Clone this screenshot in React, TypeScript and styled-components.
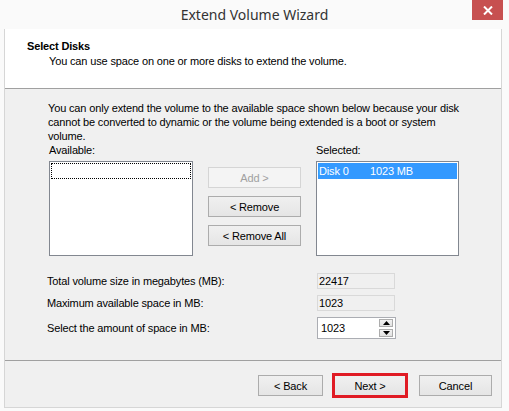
import styled, { createGlobalStyle } from "styled-components";

const Global = createGlobalStyle`
  html, body {
    margin: 0;
    padding: 0;
    background: #fafafa;
  }
  * {
    box-sizing: border-box;
  }
`;

const Window = styled.div`
  width: 509px;
  height: 411px;
  background: #fafafa;
  display: flex;
  flex-direction: column;
  padding: 0 7px 3px 4px;
  font-family: "Liberation Sans", Arial, sans-serif;
  font-size: 11px;
  letter-spacing: -0.15px;
  color: #000;
`;

const TitleBar = styled.div`
  height: 29px;
  display: grid;
  grid-template-columns: 1fr auto 1fr;
  align-items: start;
`;

const Title = styled.div`
  grid-column: 2;
  font-family: "Noto Sans", "Open Sans", sans-serif;
  font-size: 14px;
  letter-spacing: 0;
  color: #333;
  line-height: 29px;
  margin-left: 3px;
`;

const CloseButton = styled.div`
  grid-column: 3;
  justify-self: end;
  width: 31px;
  height: 20px;
  margin-right: -1px;
  background: #c75050;
  display: flex;
  align-items: center;
  justify-content: center;
`;

const Client = styled.div`
  flex: 1;
  display: flex;
  flex-direction: column;
  border: 1px solid #d6d6d6;
  border-top: none;
  background: #f0f0f0;
`;

const Header = styled.div`
  height: 60px;
  background: #fff;
  border-bottom: 1px solid #a0a0a0;
  padding: 10px 0 0 22px;
`;

const HeaderTitle = styled.div`
  font-weight: bold;
  line-height: 14px;
`;

const HeaderSub = styled.div`
  padding-left: 22px;
  line-height: 14px;
  margin-top: 1px;
`;

const Body = styled.div`
  flex: 1;
  padding: 12px 0 0 43px;
  display: flex;
  flex-direction: column;
`;

const Paragraph = styled.div`
  line-height: 14px;
  white-space: nowrap;
`;

const ListsRow = styled.div`
  display: grid;
  grid-template-columns: 144px 93px 143px;
  column-gap: 15px;
  margin-left: 1px;
`;

const Column = styled.div`
  display: flex;
  flex-direction: column;
`;

const ListLabel = styled.div`
  line-height: 14px;
  height: 18px;
`;

const ListBox = styled.div`
  height: 95px;
  background: #fff;
  border: 1px solid #828790;
  padding: 1px;
`;

const FocusRow = styled.div`
  height: 16px;
  border: 1px dotted #000;
`;

const SelectedRow = styled.div`
  height: 16px;
  background: #3399ff;
  color: #fff;
  display: flex;
  align-items: center;
  line-height: 14px;
`;

const Cell = styled.span<{ $w?: number }>`
  width: ${(p) => (p.$w ? `${p.$w}px` : "auto")};
  padding-left: 1px;
`;

const Buttons = styled.div`
  display: flex;
  flex-direction: column;
  gap: 8px;
  padding-top: 24px;
`;

const Button = styled.div<{ $w?: number; $disabled?: boolean; $gap?: number }>`
  width: ${(p) => (p.$w ? `${p.$w}px` : "100%")};
  height: 21px;
  margin-left: ${(p) => p.$gap ?? 0}px;
  display: flex;
  align-items: center;
  justify-content: center;
  border: 1px solid ${(p) => (p.$disabled ? "#d5d5d5" : "#acacac")};
  background: ${(p) =>
    p.$disabled ? "#f4f4f4" : "linear-gradient(#f0f0f0, #e5e5e5)"};
  color: ${(p) => (p.$disabled ? "#a0a0a0" : "#000")};
`;

const Fields = styled.div`
  display: grid;
  grid-template-columns: 270px 79px;
  grid-template-rows: 16px 16px 22px;
  row-gap: 6px;
  margin-top: 17px;
  margin-left: -1px;
  align-items: center;
`;

const FieldLabel = styled.div`
  line-height: 14px;
`;

const ReadOnly = styled.div`
  height: 16px;
  width: 78px;
  border: 1px solid #d9d9d9;
  background: #f0f0f0;
  line-height: 14px;
  padding-left: 1px;
`;

const Spinner = styled.div`
  height: 22px;
  width: 79px;
  border: 1px solid #abadb3;
  background: #fff;
  display: flex;
  align-items: center;
  justify-content: space-between;
  padding: 1px 2px 1px 3px;
`;

const SpinButtons = styled.div`
  display: flex;
  flex-direction: column;
  gap: 2px;
`;

const SpinButton = styled.div`
  width: 14px;
  height: 8px;
  border: 1px solid #acacac;
  background: linear-gradient(#f2f2f2, #e2e2e2);
  display: flex;
  align-items: center;
  justify-content: center;
`;

const Footer = styled.div`
  height: 47px;
  border-top: 1px solid #a0a0a0;
  display: flex;
  align-items: flex-start;
  padding: 14px 0 0 253px;
`;

const NextHighlight = styled.div`
  margin-left: 9px;
  margin-top: -2px;
  border: 3px solid #e01b24;
  width: 76px;
  height: 25px;
  display: flex;
`;

const NextButton = styled.div`
  flex: 1;
  display: flex;
  align-items: center;
  justify-content: center;
  background: linear-gradient(#f0f0f0, #e5e5e5);
`;

const Arrow = ({ up }: { up?: boolean }) => (
  <svg width="7" height="4" viewBox="0 0 7 4">
    <path d={up ? "M0 4 L3.5 0 L7 4 Z" : "M0 0 L3.5 4 L7 0 Z"} fill="#000" />
  </svg>
);

export default function App() {
  return (
    <>
      <Global />
      <Window>
        <TitleBar>
          <Title>Extend Volume Wizard</Title>
          <CloseButton>
            <svg width="10" height="9" viewBox="0 0 10 9">
              <path d="M1 0.5 L9 8.5 M9 0.5 L1 8.5" stroke="#fff" strokeWidth="2" />
            </svg>
          </CloseButton>
        </TitleBar>
        <Client>
          <Header>
            <HeaderTitle>Select Disks</HeaderTitle>
            <HeaderSub>You can use space on one or more disks to extend the volume.</HeaderSub>
          </Header>
          <Body>
            <Paragraph>
              You can only extend the volume to the available space shown below because your disk
              <br />
              cannot be converted to dynamic or the volume being extended is a boot or system
              <br />
              volume.
            </Paragraph>
            <ListsRow>
              <Column>
                <ListLabel>Available:</ListLabel>
                <ListBox>
                  <FocusRow />
                </ListBox>
              </Column>
              <Buttons>
                <Button $disabled>Add &gt;</Button>
                <Button>&lt; Remove</Button>
                <Button>&lt; Remove All</Button>
              </Buttons>
              <Column>
                <ListLabel>Selected:</ListLabel>
                <ListBox>
                  <SelectedRow>
                    <Cell $w={51}>Disk 0</Cell>
                    <Cell>1023 MB</Cell>
                  </SelectedRow>
                </ListBox>
              </Column>
            </ListsRow>
            <Fields>
              <FieldLabel>Total volume size in megabytes (MB):</FieldLabel>
              <ReadOnly>22417</ReadOnly>
              <FieldLabel>Maximum available space in MB:</FieldLabel>
              <ReadOnly>1023</ReadOnly>
              <FieldLabel>Select the amount of space in MB:</FieldLabel>
              <Spinner>
                <span>1023</span>
                <SpinButtons>
                  <SpinButton>
                    <Arrow up />
                  </SpinButton>
                  <SpinButton>
                    <Arrow />
                  </SpinButton>
                </SpinButtons>
              </Spinner>
            </Fields>
          </Body>
          <Footer>
            <Button $w={65}>&lt; Back</Button>
            <NextHighlight>
              <NextButton>Next &gt;</NextButton>
            </NextHighlight>
            <Button $w={73} $gap={11}>Cancel</Button>
          </Footer>
        </Client>
      </Window>
    </>
  );
}
